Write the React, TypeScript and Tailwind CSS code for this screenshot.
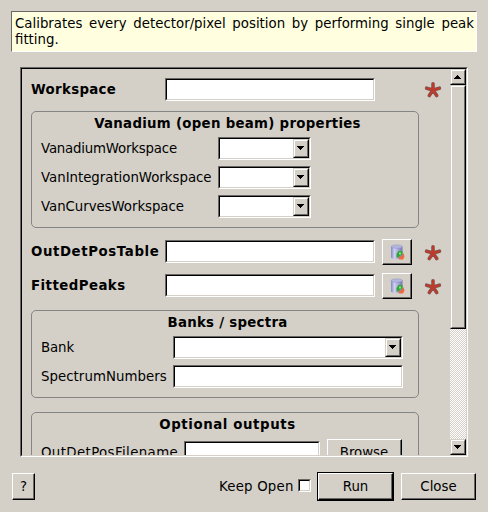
import React from "react";

type BoxProps = { c?: string; children?: React.ReactNode };

const T = ({ c = "", children }: BoxProps) => (
  <span className={`block shrink-0 whitespace-pre ${c}`}>{children}</span>
);

const Sunken = ({ c = "", children }: BoxProps) => (
  <div className={`box-border h-[23px] shrink-0 border border-t-[#6a6864] border-l-[#6a6864] border-r-white border-b-white ${c}`}>
    <div className="flex h-full justify-end border border-t-black border-l-black border-r-[#d4d0c8] border-b-[#d4d0c8] bg-white">
      {children}
    </div>
  </div>
);

const Raised = ({ c = "", children }: BoxProps) => (
  <div className={`box-border shrink-0 border border-t-[#d4d0c8] border-l-[#d4d0c8] border-r-black border-b-black ${c}`}>
    <div className="flex h-full justify-center border border-t-white border-l-white border-r-[#6a6864] border-b-[#6a6864] bg-[#d4d0c8] pt-1 pr-px">
      {children}
    </div>
  </div>
);

const PushButton = ({ c = "", children }: BoxProps) => (
  <div className={`box-border shrink-0 border border-t-white border-l-white border-r-black border-b-black ${c}`}>
    <div className="flex h-full items-center justify-center border-r border-b border-[#6a6864] bg-[#d4d0c8]">
      {children}
    </div>
  </div>
);

const Arrow = ({ up = false, c = "" }: { up?: boolean; c?: string }) => (
  <svg className={`shrink-0 ${c}`} width="7" height="4" shapeRendering="crispEdges">
    <path d={up ? "M3 0h1v1h1v1h1v1h1v1H0V3h1V2h1V1h1z" : "M0 0h7v1H6v1H5v1H4v1H3V3H2V2H1V1H0z"} />
  </svg>
);

const Combo = ({ c = "" }: { c?: string }) => (
  <Sunken c={c}>
    <Raised c="h-[19px] w-4"><Arrow c="mt-px" /></Raised>
  </Sunken>
);

const Star = ({ c = "" }: { c?: string }) => (
  <svg className={`block shrink-0 ${c}`} width="18" height="18" viewBox="0 0 18 18">
    {["#7d5a50", "#c0392b"].map((s, i) => (
      <path key={s} d="M9 9V2.8M9 9L2.6 7.2M9 9l6.4-1.8M9 9l-3.7 5.6M9 9l3.7 5.6" fill="none" stroke={s} strokeWidth={i ? 2.1 : 3.6} strokeLinecap="round" />
    ))}
  </svg>
);

const Database = () => (
  <svg className="translate-x-[0.5px]" width="16" height="16" viewBox="0 0 16 16">
    <defs>
      <linearGradient id="cylinder">
        <stop offset="0" stopColor="#8487bd" />
        <stop offset=".3" stopColor="#cfd1f3" />
        <stop offset="1" stopColor="#7376b0" />
      </linearGradient>
    </defs>
    <path d="M1.5 2.8v10.4c0 2.4 11.5 2.4 11.5 0V2.8z" fill="url(#cylinder)" />
    <ellipse cx="7.25" cy="2.6" rx="5.75" ry="1.7" fill="#b3b6df" stroke="#8d90c2" strokeWidth=".5" />
    <path d="M7 13.5V10l2-3h4v4h-2l-1.5 2.5z" fill="#2fa637" />
    <path d="M9.5 8.5h2v2h-2z" fill="#8fe283" />
    <path d="M9.5 15.5V12.5h2.5l2-3.5 1 3.5-1.5 3z" fill="#f2683c" />
  </svg>
);

const Group = ({ c = "", title, tracking, children }: BoxProps & { title: string; tracking: string }) => (
  <section className={`box-border w-[388px] shrink-0 rounded-[5px] border border-[#858585] ${c}`}>
    <T c={`pt-1 pl-[5px] text-center font-bold ${tracking}`}>{title}</T>
    {children}
  </section>
);

const vanadium = [
  ["VanadiumWorkspace", "tracking-[-0.2px]"],
  ["VanIntegrationWorkspace", "tracking-[-0.02px]"],
  ["VanCurvesWorkspace", "tracking-[-0.05px]"],
];

export default function App() {
  return (
    <main className="h-[512px] w-[488px] overflow-hidden bg-[#d4d0c8] pt-[11px] font-['DejaVu_Sans',sans-serif] text-[13.33px] leading-4 text-black">
      <div className="ml-[11px] h-[41px] w-[466px] border border-t-[#6a6864] border-l-[#6a6864] border-r-white border-b-white bg-[#ffffdf] pt-1 pl-[3px]">
        <p className="w-[459px] text-justify">Calibrates every detector/pixel position by performing single peak fitting.</p>
      </div>
      <div className="mt-[15px] ml-5 h-[390px] w-[448px] border border-t-[#6a6864] border-l-[#6a6864] border-r-white border-b-white">
        <div className="flex h-full border border-t-black border-l-black border-r-[#d4d0c8] border-b-[#d4d0c8]">
          <div className="h-full w-[428px] overflow-hidden pt-[9px] pl-[9px]">
            <div className="flex h-[23px]">
              <T c="w-[134px] pt-1 font-bold tracking-[0.33px]">Workspace</T>
              <Sunken c="w-[210px]" />
              <Star c="ml-[49px] mt-[3px]" />
            </div>
            <Group c="mt-[10px] h-[117px]" title="Vanadium (open beam) properties" tracking="tracking-[0.29px]">
              <div className="mt-[5px] ml-[9px] flex flex-col gap-1.5">
                {vanadium.map(([s, t]) => (
                  <div key={s} className="flex h-[23px]"><T c={`w-[177px] pt-1 ${t}`}>{s}</T><Combo c="w-[93px]" /></div>
                ))}
              </div>
            </Group>
            {["OutDetPosTable", "FittedPeaks"].map((s, i) => (
              <div key={s} className={`flex h-[26px] ${i ? "mt-2" : "mt-[11px]"}`}>
                <T c={`w-[134px] pt-[5px] font-bold ${i ? "tracking-[0.45px]" : "tracking-[0.59px]"}`}>{s}</T>
                <Sunken c="mt-px w-[210px]" />
                <PushButton c="ml-[7px] h-[26px] w-[30px]"><Database /></PushButton>
                <Star c="mt-[5px] ml-3" />
              </div>
            ))}
            <Group c="mt-[11px] h-[88px]" title="Banks / spectra" tracking="tracking-[0.27px]">
              <div className="mt-[5px] ml-[9px] flex flex-col gap-1.5">
                <div className="flex h-[23px]"><T c="w-[132px] pt-1 tracking-[-0.1px]">Bank</T><Combo c="w-[230px]" /></div>
                <div className="flex h-[23px]"><T c="w-[132px] pt-1 tracking-[0.04px]">SpectrumNumbers</T><Sunken c="w-[230px]" /></div>
              </div>
            </Group>
            <Group c="mt-[14px] h-[88px]" title="Optional outputs" tracking="tracking-[0.59px]">
              <div className="mt-[6px] ml-[9px] flex h-[27px]">
                <T c="w-[143px] pt-[6px] tracking-[0.38px]">OutDetPosFilename</T><Sunken c="mt-[2px] w-[136px]" />
                <PushButton c="ml-[7px] h-[27px] w-[75px]"><T c="pt-[2px]">Browse</T></PushButton>
              </div>
            </Group>
          </div>
          <div className="flex w-4 flex-col bg-[repeating-conic-gradient(white_0_25%,#d4d0c8_0_50%)] bg-size-[2px_2px]">
            <Raised c="h-4"><Arrow up /></Raised>
            <Raised c="h-[244px]" />
            <Raised c="mt-auto h-4"><Arrow /></Raised>
          </div>
        </div>
      </div>
      <footer className="mt-[15px] ml-3 flex h-[29px] items-center">
        <PushButton c="h-[27px] w-[23px]"><T c="pt-[2px] pl-px">?</T></PushButton>
        <T c="ml-[184px] w-[79px] tracking-[0.2px]">Keep Open</T>
        <div className="size-[13px] shrink-0 -translate-y-px border border-t-[#6a6864] border-l-[#6a6864] border-r-white border-b-white"><div className="size-full border border-t-black border-l-black border-r-[#d4d0c8] border-b-[#d4d0c8] bg-white" /></div>
        <div className="ml-1.5 h-[29px] w-[77px] border border-black"><PushButton c="h-[27px]"><T c="pt-[2px] pl-px">Run</T></PushButton></div>
        <PushButton c="ml-[7px] h-[27px] w-[75px]"><T c="pt-[2px] pl-px">Close</T></PushButton>
      </footer>
    </main>
  );
}
